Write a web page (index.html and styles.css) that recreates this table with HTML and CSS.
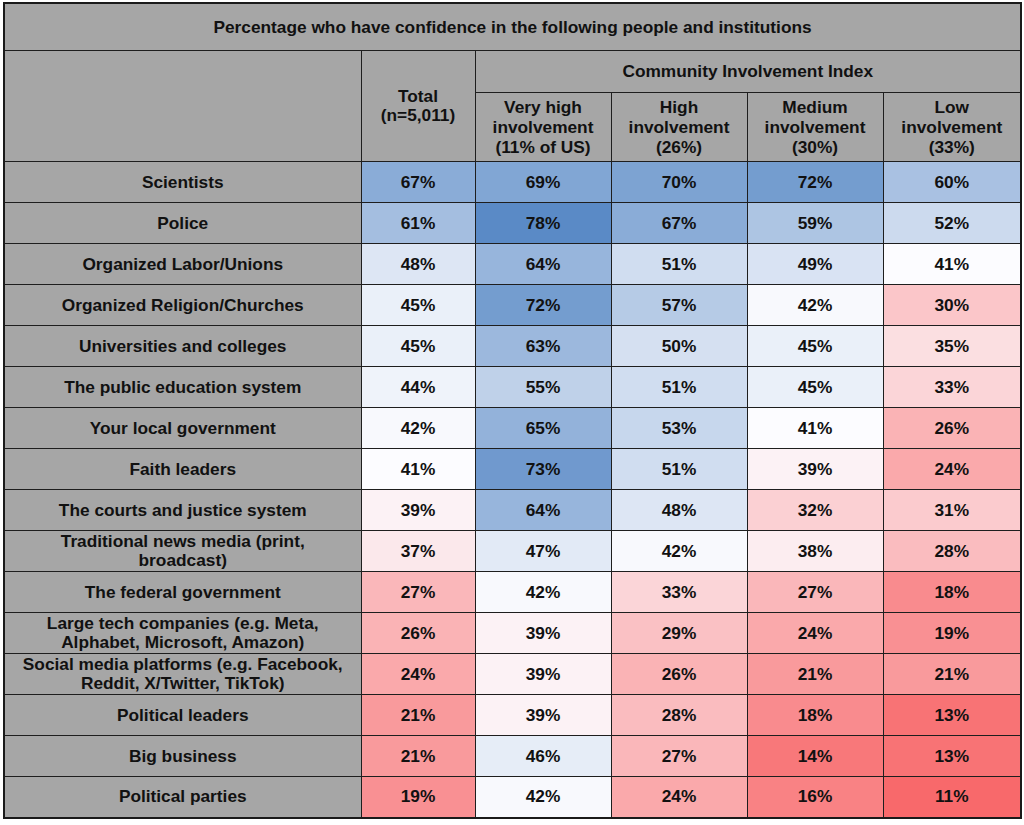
FILE: index.html
```html
<!DOCTYPE html>
<html lang="en">
<head>
<meta charset="utf-8">
<title>Confidence in people and institutions</title>
<link rel="stylesheet" href="styles.css">
</head>
<body>
<table class="grid">
  <colgroup>
    <col class="c-label">
    <col class="c-total">
    <col class="c-seg">
    <col class="c-seg">
    <col class="c-seg">
    <col class="c-last">
  </colgroup>
  <thead>
    <tr class="r-title"><th colspan="6">Percentage who have confidence in the following people and institutions</th></tr>
    <tr class="r-group">
      <th rowspan="2"></th>
      <th rowspan="2" class="h-total">Total<br>(n=5,011)</th>
      <th colspan="4">Community Involvement Index</th>
    </tr>
    <tr class="r-sub">
      <th>Very high<br>involvement<br>(11% of US)</th>
      <th>High<br>involvement<br>(26%)</th>
      <th>Medium<br>involvement<br>(30%)</th>
      <th>Low<br>involvement<br>(33%)</th>
    </tr>
  </thead>
  <tbody>
    <tr><th>Scientists</th><td style="background:rgb(138,172,215)">67%</td><td style="background:rgb(129,166,212)">69%</td><td style="background:rgb(125,163,210)">70%</td><td style="background:rgb(116,157,207)">72%</td><td style="background:rgb(169,193,226)">60%</td></tr>
    <tr><th>Police</th><td style="background:rgb(164,190,224)">61%</td><td style="background:rgb(90,138,198)">78%</td><td style="background:rgb(138,172,215)">67%</td><td style="background:rgb(173,197,227)">59%</td><td style="background:rgb(204,218,238)">52%</td></tr>
    <tr><th>Organized Labor/Unions</th><td style="background:rgb(221,230,244)">48%</td><td style="background:rgb(151,181,220)">64%</td><td style="background:rgb(208,221,240)">51%</td><td style="background:rgb(217,227,243)">49%</td><td style="background:rgb(252,252,255)">41%</td></tr>
    <tr><th>Organized Religion/Churches</th><td style="background:rgb(234,240,249)">45%</td><td style="background:rgb(116,157,207)">72%</td><td style="background:rgb(182,203,230)">57%</td><td style="background:rgb(248,249,253)">42%</td><td style="background:rgb(251,198,201)">30%</td></tr>
    <tr><th>Universities and colleges</th><td style="background:rgb(234,240,249)">45%</td><td style="background:rgb(156,184,221)">63%</td><td style="background:rgb(213,224,241)">50%</td><td style="background:rgb(234,240,249)">45%</td><td style="background:rgb(251,223,225)">35%</td></tr>
    <tr><th>The public education system</th><td style="background:rgb(239,243,250)">44%</td><td style="background:rgb(191,209,233)">55%</td><td style="background:rgb(208,221,240)">51%</td><td style="background:rgb(234,240,249)">45%</td><td style="background:rgb(251,213,216)">33%</td></tr>
    <tr><th>Your local government</th><td style="background:rgb(248,249,253)">42%</td><td style="background:rgb(147,178,218)">65%</td><td style="background:rgb(199,215,237)">53%</td><td style="background:rgb(252,252,255)">41%</td><td style="background:rgb(250,179,181)">26%</td></tr>
    <tr><th>Faith leaders</th><td style="background:rgb(252,252,255)">41%</td><td style="background:rgb(112,153,206)">73%</td><td style="background:rgb(208,221,240)">51%</td><td style="background:rgb(252,242,245)">39%</td><td style="background:rgb(250,169,171)">24%</td></tr>
    <tr><th>The courts and justice system</th><td style="background:rgb(252,242,245)">39%</td><td style="background:rgb(151,181,220)">64%</td><td style="background:rgb(221,230,244)">48%</td><td style="background:rgb(251,208,211)">32%</td><td style="background:rgb(251,203,206)">31%</td></tr>
    <tr><th>Traditional news media (print,<br>broadcast)</th><td style="background:rgb(251,232,235)">37%</td><td style="background:rgb(226,234,246)">47%</td><td style="background:rgb(248,249,253)">42%</td><td style="background:rgb(252,237,240)">38%</td><td style="background:rgb(250,188,191)">28%</td></tr>
    <tr><th>The federal government</th><td style="background:rgb(250,183,186)">27%</td><td style="background:rgb(248,249,253)">42%</td><td style="background:rgb(251,213,216)">33%</td><td style="background:rgb(250,183,186)">27%</td><td style="background:rgb(249,139,142)">18%</td></tr>
    <tr><th>Large tech companies (e.g. Meta,<br>Alphabet, Microsoft, Amazon)</th><td style="background:rgb(250,179,181)">26%</td><td style="background:rgb(252,242,245)">39%</td><td style="background:rgb(250,193,196)">29%</td><td style="background:rgb(250,169,171)">24%</td><td style="background:rgb(249,144,147)">19%</td></tr>
    <tr><th>Social media platforms (e.g. Facebook,<br>Reddit, X/Twitter, TikTok)</th><td style="background:rgb(250,169,171)">24%</td><td style="background:rgb(252,242,245)">39%</td><td style="background:rgb(250,179,181)">26%</td><td style="background:rgb(249,154,156)">21%</td><td style="background:rgb(249,154,156)">21%</td></tr>
    <tr><th>Political leaders</th><td style="background:rgb(249,154,156)">21%</td><td style="background:rgb(252,242,245)">39%</td><td style="background:rgb(250,188,191)">28%</td><td style="background:rgb(249,139,142)">18%</td><td style="background:rgb(248,115,117)">13%</td></tr>
    <tr><th>Big business</th><td style="background:rgb(249,154,156)">21%</td><td style="background:rgb(230,237,247)">46%</td><td style="background:rgb(250,183,186)">27%</td><td style="background:rgb(248,120,122)">14%</td><td style="background:rgb(248,115,117)">13%</td></tr>
    <tr><th>Political parties</th><td style="background:rgb(249,144,147)">19%</td><td style="background:rgb(248,249,253)">42%</td><td style="background:rgb(250,169,171)">24%</td><td style="background:rgb(249,130,132)">16%</td><td style="background:rgb(248,105,107)">11%</td></tr>
  </tbody>
</table>
</body>
</html>
```
FILE: styles.css
```css
html, body {
  margin: 0;
  background: #ffffff;
}
body {
  padding: 2px 0 0 3px;
  font-family: "Liberation Sans", Arial, sans-serif;
  font-size: 17.3px;
  font-weight: bold;
  color: #111111;
}
.grid {
  border-collapse: collapse;
  table-layout: fixed;
  width: 1017px;
  border: 2px solid #1a1a1a;
}
.c-label { width: 357px; }
.c-total { width: 114px; }
.c-seg { width: 136px; }
.c-last { width: 138px; }
.grid th,
.grid td {
  border: 1px solid #1e1e1e;
  padding: 0 2px;
  text-align: center;
  vertical-align: middle;
  line-height: 19px;
}
.grid th {
  background: #a6a6a6;
  font-weight: bold;
}
.grid td {
  font-weight: bold;
}
.r-title th { height: 46px; }
.r-group th { height: 41px; }
.r-sub th { height: 68px; line-height: 20px; }
.h-total { line-height: 20px; }
tbody tr { height: 41px; }
```
